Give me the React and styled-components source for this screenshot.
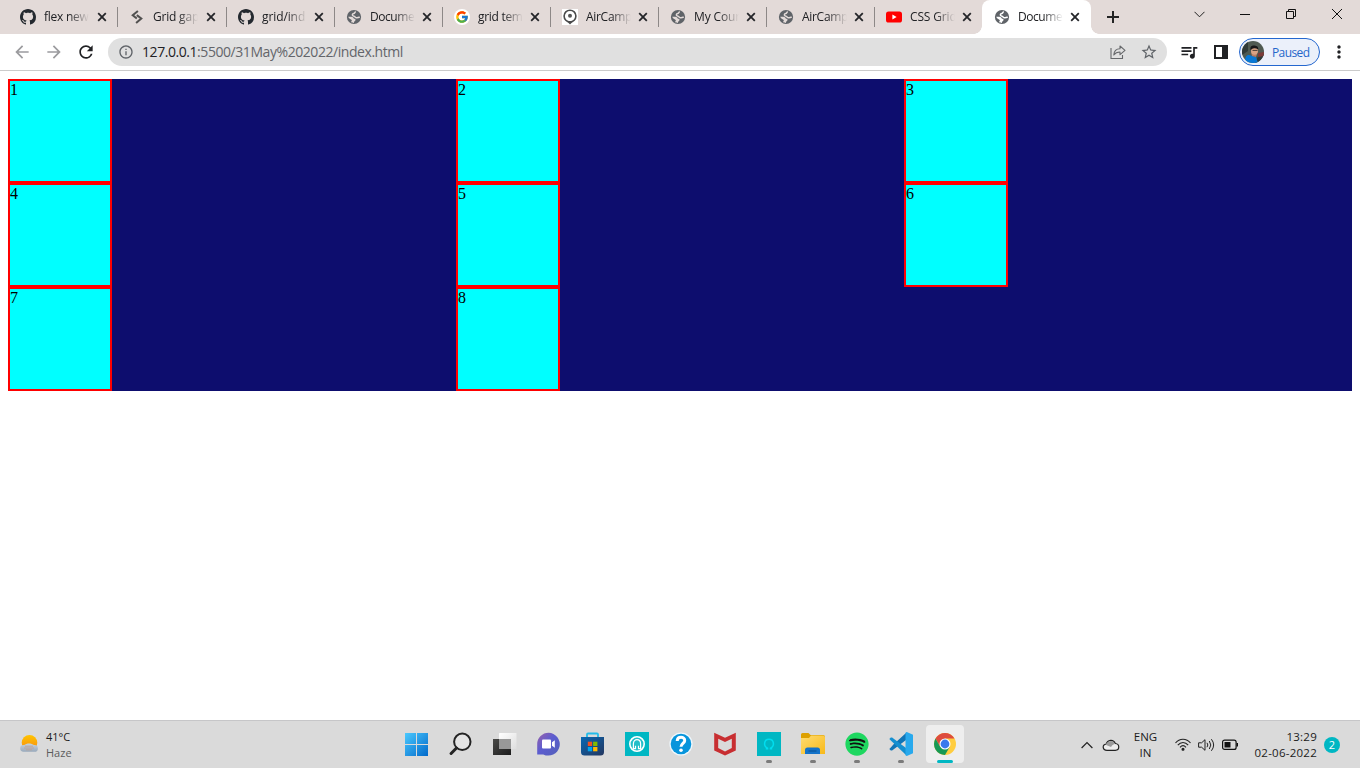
import React from "react";
import styled, { createGlobalStyle } from "styled-components";
import { MdArrowBack, MdArrowForward, MdRefresh, MdInfoOutline, MdStarBorder, MdQueueMusic, MdMoreVert } from "react-icons/md";
import { FcGoogle } from "react-icons/fc";
import { FaSpotify } from "react-icons/fa";

const GlobalStyle = createGlobalStyle`
  * { box-sizing: border-box; }
  body { margin: 0; background: #fff; overflow: hidden; }
  svg { display: block; flex: none; }
`;

const Screen = styled.div`
  width: 1360px;
  height: 768px;
  display: flex;
  flex-direction: column;
  font-family: "Open Sans", "Noto Sans", sans-serif;
  overflow: hidden;
`;

/* Tab strip */
const TabStrip = styled.header`
  height: 34px;
  flex: none;
  display: flex;
  padding-left: 10px;
  background: #e3dad8;
`;
const Tab = styled.div`
  width: ${(p) => p.$width || 108}px;
  height: 34px;
  flex: none;
  display: flex;
  align-items: center;
  padding-left: ${(p) => p.$inset || 11}px;
  position: relative;
  background: ${(p) => (p.$active ? "#fff" : "transparent")};
  border-radius: 8px 8px 0 0;
  &::before, &::after {
    content: "";
    display: ${(p) => (p.$active ? "block" : "none")};
    position: absolute;
    bottom: 0;
    width: 8px;
    height: 8px;
  }
  &::before { left: -8px; background: radial-gradient(circle at 0 0, transparent 7.5px, #fff 8px); }
  &::after { right: -8px; background: radial-gradient(circle at 100% 0, transparent 7.5px, #fff 8px); }
`;
const TabTitle = styled.span`
  width: 48px;
  margin-left: 8px;
  white-space: nowrap;
  font-size: 12px;
  line-height: 18px;
  letter-spacing: ${(p) => p.$spacing}px;
  color: #202124;
  mask-image: linear-gradient(90deg, #000 25px, transparent 45px);
`;
const TabClose = styled.span`
  width: 16px;
  margin-left: ${(p) => p.$gap || 1}px;
  display: flex;
  justify-content: center;
`;
const Separator = styled.i`
  width: 1px;
  height: 20px;
  margin-left: auto;
  background: #8d8887;
`;
const NewTab = styled.div`
  width: 44px;
  display: flex;
  align-items: center;
  justify-content: center;
`;
const WindowControls = styled.div`
  height: 28px;
  display: flex;
  margin-left: auto;
`;
const WindowButton = styled.div`
  width: 46px;
  display: flex;
  align-items: center;
  justify-content: center;
`;

/* Toolbar */
const Toolbar = styled.nav`
  height: 37px;
  flex: none;
  display: flex;
  align-items: center;
  padding: 0 11px 0 12px;
  border-bottom: 1px solid #cbcbcb;
  background: #fff;
  color: #202124;
`;
const NavButtons = styled.div`
  width: 96px;
  display: flex;
  gap: 12px;
  color: #9b9b9e;
`;
const AddressBar = styled.div`
  width: 1059px;
  height: 28px;
  display: flex;
  align-items: center;
  padding: 0 9px 0 10px;
  border-radius: 14px;
  background: #e0e0e0;
  color: #5f6368;
`;
const Url = styled.span`
  margin-left: 8px;
  flex: 1;
  white-space: nowrap;
  font-size: 14px;
  line-height: 20px;
  letter-spacing: -0.44px;
  color: #63656a;
  b { font-weight: 400; color: #202124; }
`;
const AddressActions = styled.div`
  display: flex;
  align-items: center;
  gap: 14px;
`;
const ToolbarActions = styled.div`
  display: flex;
  align-items: center;
  gap: 15px;
  margin-left: 12px;
`;
const ProfileChip = styled.div`
  width: 81px;
  height: 28px;
  display: flex;
  align-items: center;
  gap: 8px;
  margin-left: 11px;
  padding-left: 2px;
  border: 1px solid #2467cf;
  border-radius: 14px;
  background: #ebf0fa;
  color: #2566ca;
  font-size: 12px;
  letter-spacing: -0.6px;
`;
const MenuButton = styled.div`
  margin-left: 8.5px;
  width: 20px;
`;

/* Page */
const Page = styled.main`
  flex: 1;
  padding: 8px;
  background: #fff;
`;
const BoxGrid = styled.section`
  display: grid;
  grid-template-columns: repeat(3, 1fr);
  background: #0d0d6e;
`;
const Box = styled.div`
  width: 104px;
  height: 104px;
  border: 2px solid #f00;
  background: #0ff;
  color: #000;
  font: 16px/18px "Liberation Serif", serif;
`;

/* Taskbar */
const Taskbar = styled.footer`
  height: 48px;
  flex: none;
  display: grid;
  grid-template-columns: 395px 572px 1fr;
  border-top: 1px solid #c6c6c8;
  background: #dadada;
  color: #1b1b1b;
  font-size: 11px;
  line-height: 16px;
`;
const Weather = styled.div`
  display: flex;
  align-items: center;
  gap: 7px;
  padding-left: 19px;
`;
const Stack = styled.div`
  width: ${(p) => p.$width || "auto"};
  text-align: ${(p) => p.$align || "left"};
  letter-spacing: ${(p) => p.$spacing || 0}px;
  font-size: ${(p) => p.$size || 11}px;
  white-space: nowrap;
`;
const Muted = styled.div`
  color: #5c5c5c;
`;
const Apps = styled.div`
  display: flex;
`;
const AppButton = styled.div`
  width: 38px;
  height: 38px;
  margin: 4px 3px;
  position: relative;
  display: flex;
  align-items: center;
  justify-content: center;
  border-radius: 4px;
  background: ${(p) => (p.$state === "active" ? "#eeeeee" : "transparent")};
  &::after {
    content: "";
    display: ${(p) => (p.$state ? "block" : "none")};
    position: absolute;
    bottom: 0;
    width: ${(p) => (p.$state === "active" ? 16 : 6)}px;
    height: 3px;
    border-radius: 2px;
    background: ${(p) => (p.$state === "active" ? "#00b7c3" : "#7b7b7b")};
  }
`;
const Tray = styled.div`
  display: flex;
  align-items: center;
  justify-content: flex-end;
  padding-right: 20px;
`;
const TrayIcons = styled.div`
  display: flex;
  align-items: center;
  gap: ${(p) => p.$gap}px;
  margin-left: ${(p) => p.$start || 0}px;
  margin-right: ${(p) => p.$end}px;
`;
const Badge = styled.div`
  width: 16px;
  height: 16px;
  margin-left: 7px;
  border-radius: 50%;
  background: #00b7c3;
  color: #fff;
  font-size: 11px;
  line-height: 15px;
  text-align: center;
`;

const GitHub = () => (
  <svg width="16" height="16" viewBox="0 0 16 16" fill="#24292f">
    <path d="M8 0C3.58 0 0 3.58 0 8c0 3.54 2.29 6.53 5.47 7.59.4.07.55-.17.55-.38 0-.19-.01-.82-.01-1.49-2.01.37-2.53-.49-2.69-.94-.09-.23-.48-.94-.82-1.13-.28-.15-.68-.52-.01-.53.63-.01 1.08.58 1.23.82.72 1.21 1.87.87 2.33.66.07-.52.28-.87.51-1.07-1.78-.2-3.64-.89-3.64-3.95 0-.87.31-1.59.82-2.15-.08-.2-.36-1.02.08-2.12 0 0 .67-.21 2.2.82.64-.18 1.32-.27 2-.27s1.36.09 2 .27c1.53-1.04 2.2-.82 2.2-.82.44 1.1.16 1.92.08 2.12.51.56.82 1.27.82 2.15 0 3.07-1.87 3.75-3.65 3.95.29.25.54.73.54 1.48 0 1.07-.01 1.93-.01 2.2 0 .21.15.46.55.38A8.01 8.01 0 0 0 16 8c0-4.42-3.58-8-8-8Z" />
  </svg>
);
const Globe = ({ back = "#e3dad8" }) => (
  <svg width="16" height="16" viewBox="0 0 16 16">
    <circle cx="8" cy="8" r="7.1" fill="#5f6368" />
    <path d="M9.8 2.6C8.6 3 8.900 4.300 7.600 4.500c-1.600.4-1.700 2.100-.1 2.500 1.700.3 1.500 1.500 3 1.700 1.200.1 2-.1 3.200-.7" fill="none" stroke={back} strokeWidth="1.5" />
    <path d="M2.200 7.800h3c1.800 0 2.500 1 2.700 2 1 0 1.800.2 1.600 1.200-.2 1.200-1.500.9-1.700 2.900-1.400-.1-2.200-.5-2.800-1 .9-.7 1.100-1.400.4-2.100C4.500 10 3 10 2.200 7.800Z" fill={back} />
  </svg>
);
const LinkMark = () => (
  <svg width="16" height="16" viewBox="0 0 16 16" fill="none" stroke="#51504f" strokeWidth="2">
    <path d="M8.900 1.900 3.700 6.200 7.800 9.500M7.800 6.100 12.300 9.500 7.100 14" />
  </svg>
);
const GoogleMark = () => (
  <svg width="16" height="16" viewBox="0 0 16 16">
    <circle cx="8" cy="8" r="8" fill="#fff" />
    <FcGoogle x="1" y="1" size={14} />
  </svg>
);
const PinMark = () => (
  <svg width="16" height="16" viewBox="0 0 16 16">
    <path fill="#fff" d="M0 0h16v16H0z" />
    <circle cx="8" cy="7.1" r="5.9" fill="none" stroke="#4b4b4b" strokeWidth="1.6" />
    <path d="M4.5 12h7L8 15.4Z" fill="#4b4b4b" />
    <circle cx="8" cy="6.8" r="2" fill="#555" />
  </svg>
);
const YouTube = () => (
  <svg width="16" height="16" viewBox="0 0 16 16">
    <rect y="2.5" width="16" height="11" rx="2.6" fill="#f00" />
    <path d="m6.4 5.6 4.2 2.4-4.2 2.4Z" fill="#fff" />
  </svg>
);
const Cross = () => (
  <svg width="10" height="10" viewBox="0 0 10 10" stroke="#242529" strokeWidth="1.8">
    <path d="m1.2 1.2 7.6 7.6M8.8 1.2 1.2 8.8" />
  </svg>
);
const Avatar = () => (
  <svg width="22" height="22" viewBox="0 0 22 22">
    <defs><clipPath id="face"><circle cx="11" cy="11" r="11" /></clipPath></defs>
    <g clipPath="url(#face)">
      <path fill="#4f5a52" d="M0 0h22v22H0z" />
      <path fill="#303a38" d="M0 0h6v10L0 14zM17 13h5v9h-9z" />
      <path fill="#7b3b38" d="m16 12 6-1v4l-6 1z" />
      <path d="M3 22c0-6 1-8 4-8l7 2 2 6z" fill="#0878d5" />
      <path d="m9 11 6 2-1 3-4-1z" fill="#b97e65" />
      <ellipse cx="12.5" cy="9.8" rx="3.5" ry="4" fill="#d9a384" />
      <path d="M8.600 9.300C7.700 5 10 4.300 12.600 4.500c2.800.2 4 2 3.600 4-2-1.300-4.600-1.500-6.300-.6Z" fill="#171719" />
      <path d="M10.500 9.400h5" stroke="#222" strokeWidth=".8" />
    </g>
  </svg>
);

const tabs = [
  { icon: <GitHub />, title: "flex new", spacing: -0.25, inset: 10, closeGap: 2 },
  { icon: <LinkMark />, title: "Grid gap", spacing: -0.2, width: 109, closeGap: 2 },
  { icon: <GitHub />, title: "grid/ind", spacing: -0.1 },
  { icon: <Globe />, title: "Docume", spacing: -0.45 },
  { icon: <GoogleMark />, title: "grid tem", spacing: -0.3 },
  { icon: <PinMark />, title: "AirCamp", spacing: -0.3 },
  { icon: <Globe />, title: "My Cour", spacing: -0.15 },
  { icon: <Globe />, title: "AirCamp", spacing: -0.3 },
  { icon: <YouTube />, title: "CSS Grid", spacing: -0.15, width: 107 },
  { icon: <Globe back="#fff" />, title: "Docume", spacing: -0.45, active: true, width: 109, inset: 12 },
];

const WindowsLogo = () => (
  <svg width="24" height="24" viewBox="0 0 24 24">
    <defs><linearGradient id="win" x1="0" y1="0" x2="24" y2="24" gradientUnits="userSpaceOnUse"><stop stopColor="#4ccbff" /><stop offset="1" stopColor="#0067c9" /></linearGradient></defs>
    <path d="M0 1h11v11H0zm12 0h11v11H12zM0 13h11v11H0zm12 0h11v11H12z" fill="url(#win)" />
  </svg>
);
const SearchLogo = () => (
  <svg width="24" height="24" viewBox="0 0 24 24" fill="none" stroke="#242424">
    <circle cx="13.3" cy="9.8" r="8.2" strokeWidth="2" fill="#e4e4e4" />
    <path d="m7.5 16-5.400 5.500" strokeWidth="3" strokeLinecap="round" />
  </svg>
);
const TaskView = () => (
  <svg width="24" height="24" viewBox="0 0 24 24">
    <defs>
      <linearGradient id="tvd" x1="0" y1="0" x2="1" y2="1"><stop stopColor="#4a4a48" /><stop offset="1" stopColor="#1c1c1c" /></linearGradient>
      <linearGradient id="tvl" x1="0" y1="0" x2="1" y2="1"><stop stopColor="#fff" /><stop offset="1" stopColor="#dedede" /></linearGradient>
    </defs>
    <rect x="0" y="7" width="18" height="16" fill="url(#tvd)" />
    <rect x="6" y="1" width="17.5" height="16" rx=".5" fill="url(#tvl)" />
    <path d="M6 7h12v10H6z" fill="#989898" />
  </svg>
);
const Chat = () => (
  <svg width="24" height="24" viewBox="0 0 24 24">
    <defs><linearGradient id="chat" x1="0" y1="0" x2="1" y2="1"><stop stopColor="#9a61a9" /><stop offset=".45" stopColor="#5c5dd0" /><stop offset="1" stopColor="#5360b8" /></linearGradient></defs>
    <path d="M11.500.8a11.400 11.400 0 1 1-5.200 21.600H.2V12A11.400 11.400 0 0 1 11.500.8Z" fill="url(#chat)" />
    <rect x="5" y="7.5" width="9" height="9" rx="1" fill="#fff" />
    <path d="m15 10.200 2.800-2v7.600L15 13.800Z" fill="#fff" />
  </svg>
);
const Store = () => (
  <svg width="24" height="24" viewBox="0 0 24 24">
    <defs><linearGradient id="store" x1="0" y1="0" x2="1" y2="1"><stop stopColor="#0868b4" /><stop offset="1" stopColor="#24365f" /></linearGradient></defs>
    <path d="M6 6V2.500q0-1 1-1h9q1 0 1 1V6" fill="none" stroke="#23bce9" strokeWidth="1.8" />
    <path d="M0 5h23v15q0 3.500-3.500 3.500h-16Q0 23.500 0 20Z" fill="url(#store)" />
    <path d="M6.800 9.700h4.300V14H6.800z" fill="#f25022" />
    <path d="M12.100 9.700h4.300V14h-4.300z" fill="#7fba00" />
    <path d="M6.800 15h4.300v4.300H6.800z" fill="#00a4ef" />
    <path d="M12.100 15h4.300v4.300h-4.300z" fill="#ffb900" />
  </svg>
);
const TealBadge = () => (
  <svg width="24" height="24" viewBox="0 0 24 24" fill="none">
    <path d="M0 0h24v24H0z" fill="#00b7c3" />
    <circle cx="12" cy="12" r="7.2" fill="#22bfc9" stroke="#fff" strokeWidth="1.6" />
    <path d="M8.400 16.500v-4.700c0-5.500 7.200-5.500 7.200 0v4.700M7.800 16.700h2.700v-3m5.700 3h-2.700v-3" stroke="#fff" strokeWidth="1.2" />
  </svg>
);
const Help = () => (
  <svg width="24" height="24" viewBox="0 0 24 24">
    <circle cx="12" cy="12" r="11.6" fill="#eef7fc" />
    <circle cx="12" cy="12" r="10.3" fill="#0795dc" />
    <path d="M8.200 9c.1-4.900 7.700-4.700 7.500-.4-.1 2.700-3.700 2.900-3.700 6.200" fill="none" stroke="#fff" strokeWidth="3" />
    <circle cx="12" cy="18.2" r="1.8" fill="#fff" />
  </svg>
);
const Shield = () => (
  <svg width="24" height="24" viewBox="0 0 24 24">
    <path d="m1.200.8 10.800 5 10.800-5v17.600L12 23.600 1.200 18.400Zm4 6v9.300l6.800 3.300 6.800-3.300V6.800L12 10.100Z" fill="#c82e31" fillRule="evenodd" />
  </svg>
);
const CyanRing = () => (
  <svg width="24" height="24" viewBox="0 0 24 24">
    <path d="M0 0h24v24H0z" fill="#00b7c3" />
    <path d="M8.800 16.800h1.700v-.7c-4.500-2.200-3.600-8.900 1.500-8.900s6 6.700 1.500 8.900v.7h1.700" fill="none" stroke="#00deef" strokeWidth="1.5" />
  </svg>
);
const Folder = () => (
  <svg width="24" height="24" viewBox="0 0 24 24">
    <defs><linearGradient id="folder" x1="0" y1="0" x2="1" y2="1"><stop stopColor="#ffdc72" /><stop offset="1" stopColor="#f8b919" /></linearGradient></defs>
    <path d="M0 2.500Q0 1 1.500 1h6l2 2H22q2 0 2 2v8H0Z" fill="#dda000" />
    <path d="M0 6h8l2-2.500h12q2 0 2 2V22H0Z" fill="url(#folder)" />
    <path d="M4 22v-4q0-2.500 2.500-2.500h10q2.500 0 2.500 2.500v4Z" fill="#1473c9" />
    <path d="M7.500 19h8" stroke="#0b559c" strokeWidth="1.2" />
  </svg>
);
const Spotify = () => (
  <svg width="24" height="24" viewBox="0 0 24 24">
    <circle cx="12" cy="12" r="9" fill="#101010" />
    <FaSpotify size={24} color="#1ed760" />
  </svg>
);
const Code = () => (
  <svg width="24" height="24" viewBox="0 0 24 24">
    <path d="M17.800.2 4.400 12.500 1.800 15.600.3 17.100l1.500 1.300h1.300L18 7.200Z" fill="#1075b7" />
    <path d="M3.100 5.600H1.800L.3 7l1.500 1.600 16 15.200.2-7Z" fill="#148fd0" />
    <path d="M17.800 0 24 2.800v18.400L17.800 24l-1.300-.8V.8Z" fill="#28a9ed" />
  </svg>
);
const Chrome = () => (
  <svg width="24" height="24" viewBox="0 0 24 24">
    <circle cx="12" cy="12" r="11" fill="#ffcd40" />
    <path d="M2.500 6.500A11 11 0 0 1 21.500 6.500H12L7.200 14.700Z" fill="#dd4b3f" />
    <path d="M2.500 6.500A11 11 0 0 0 12 23l4.800-8.300H7.200Z" fill="#179955" />
    <circle cx="12" cy="12" r="5.5" fill="#fff" />
    <circle cx="12" cy="12" r="4.4" fill="#3979ed" />
  </svg>
);

const apps = [
  [WindowsLogo], [SearchLogo], [TaskView], [Chat], [Store], [TealBadge], [Help], [Shield],
  [CyanRing, "open"], [Folder, "open"], [Spotify, "open"], [Code, "open"], [Chrome, "active"],
];

function BrowserTabs() {
  return (
    <TabStrip>
      {tabs.map((t, i) => (
        <Tab key={i} $active={t.active} $width={t.width} $inset={t.inset}>
          {t.icon}
          <TabTitle $spacing={t.spacing}>{t.title}</TabTitle>
          <TabClose $gap={t.closeGap}><Cross /></TabClose>
          {i < 8 && <Separator />}
        </Tab>
      ))}
      <NewTab>
        <svg width="12" height="12" viewBox="0 0 12 12" stroke="#242424" strokeWidth="2"><path d="M6 0v12M0 6h12" /></svg>
      </NewTab>
      <WindowControls>
        <WindowButton><svg width="11" height="7" viewBox="0 0 11 7" fill="none" stroke="#202020"><path d="m.5.8 5 5 5-5" /></svg></WindowButton>
        <WindowButton><svg width="10" height="1" viewBox="0 0 10 1"><path d="M0 0h10v1H0z" fill="#111" /></svg></WindowButton>
        <WindowButton><svg width="10" height="10" viewBox="0 0 10 10" fill="none" stroke="#111"><path d="M.5 2.500h7v7h-7zM2.500 2.500v-2h7v7h-2" /></svg></WindowButton>
        <WindowButton><svg width="10" height="10" viewBox="0 0 10 10" stroke="#111"><path d="m0 0 10 10m0-10L0 10" /></svg></WindowButton>
      </WindowControls>
    </TabStrip>
  );
}

export default function App() {
  return (
    <Screen>
      <GlobalStyle />
      <BrowserTabs />
      <Toolbar>
        <NavButtons>
          <MdArrowBack size={20} /><MdArrowForward size={20} /><MdRefresh size={20} color="#202124" />
        </NavButtons>
        <AddressBar>
          <MdInfoOutline size={16} />
          <Url><b>127.0.0.1</b>:5500/31May%202022/index.html</Url>
          <AddressActions>
            <svg width="16" height="16" viewBox="0 0 16 16" fill="none" stroke="#66686b" strokeWidth="1.1">
              <path d="M1 4v10.500h11.500V11" /><path d="M10 2v2.700C6 4.700 4 7.500 3.800 11c1.600-2.300 3.500-3 6.200-3v2.700l5-4.300Z" strokeLinejoin="round" />
            </svg>
            <MdStarBorder size={18} />
          </AddressActions>
        </AddressBar>
        <ToolbarActions>
          <MdQueueMusic size={20} />
          <svg width="14" height="14" viewBox="0 0 14 14" fill="none" stroke="#202124" strokeWidth="2"><path d="M1 1h12v12H1z" /><path d="M9 1h4v12H9z" fill="#202124" /></svg>
        </ToolbarActions>
        <ProfileChip><Avatar />Paused</ProfileChip>
        <MenuButton><MdMoreVert size={20} /></MenuButton>
      </Toolbar>
      <Page>
        <BoxGrid>{[1, 2, 3, 4, 5, 6, 7, 8].map((n) => <Box key={n}>{n}</Box>)}</BoxGrid>
      </Page>
      <Taskbar>
        <Weather>
          <svg width="20" height="20" viewBox="0 0 20 20">
            <defs>
              <linearGradient id="sun" x2="0" y2="1"><stop stopColor="#ffc400" /><stop offset="1" stopColor="#f78912" /></linearGradient>
              <linearGradient id="haze" x2="0" y2="1"><stop stopColor="#c6d3df" /><stop offset="1" stopColor="#98a9bb" /></linearGradient>
            </defs>
            <circle cx="10.5" cy="7.8" r="7.8" fill="url(#sun)" />
            <path d="M4.500 16.800a3.400 3.400 0 0 1 .2-6.800c1.600 0 2-1.500 5.300-1.500s4 1.500 5.500 1.500a3.400 3.400 0 0 1 0 6.800Z" fill="url(#haze)" />
            <path d="M6 11.200h8M5 13h10M7 14.800h6" stroke="#c2a08f" strokeWidth=".8" />
          </svg>
          <Stack>41°C<Muted>Haze</Muted></Stack>
        </Weather>
        <Apps>{apps.map(([Icon, state], i) => <AppButton key={i} $state={state}><Icon /></AppButton>)}</Apps>
        <Tray>
          <TrayIcons $gap={9} $end={10}>
            <svg width="12" height="8" viewBox="0 0 12 8" fill="none" stroke="#222" strokeWidth="1.2"><path d="m.6 7 5.400-5.500L11.400 7" /></svg>
            <svg width="18" height="14" viewBox="0 0 18 14" fill="none" stroke="#222" strokeWidth="1.2">
              <path d="M5 12.300c-4.700 0-5.100-5.700-.8-6.200C5.500 1.500 11.500.8 13.300 5.500c4.700.4 4.500 6.800 0 6.800Z" fill="#eee" />
              <path d="M3.500 6.800C6.500 2 11.500 2 13 6c-1.500 0-2.300.7-4 3Z" fill="#9b9b9b" stroke="none" />
            </svg>
          </TrayIcons>
          <Stack $width="30px" $align="center" $size={11.5}>ENG<br />IN</Stack>
          <TrayIcons $gap={7} $start={15} $end={15}>
            <svg width="16" height="13" viewBox="0 0 16 13" fill="none" stroke="#222" strokeWidth="1.1"><path d="M.5 5c4-5 11-5 15 0M2.800 7.200c3-3.700 7.400-3.700 10.400 0M5 9.300c2-2.200 4-2.200 6 0" /><circle cx="8" cy="11.2" r="1" fill="#222" /></svg>
            <svg width="17" height="14" viewBox="0 0 17 14" fill="none" stroke="#222"><path d="M.6 4.800h3L7 1.700v10.600L3.600 9.200h-3ZM9 4.800q1.700 2.200 0 4.400M11.300 3q3 4 0 8M13.400 1.200q4.500 5.800 0 11.600" /></svg>
            <svg width="17" height="12" viewBox="0 0 17 12"><rect x=".6" y="1.1" width="13.5" height="9.3" rx="2" fill="none" stroke="#111" strokeWidth="1.2" /><path d="M2.500 3h6v5.500h-6zM14.500 4H16v3.500h-1.500z" fill="#111" /></svg>
          </TrayIcons>
          <Stack $align="right" $size={11.5} $spacing={0.25}>13:29<br />02-06-2022</Stack>
          <Badge>2</Badge>
        </Tray>
      </Taskbar>
    </Screen>
  );
}
